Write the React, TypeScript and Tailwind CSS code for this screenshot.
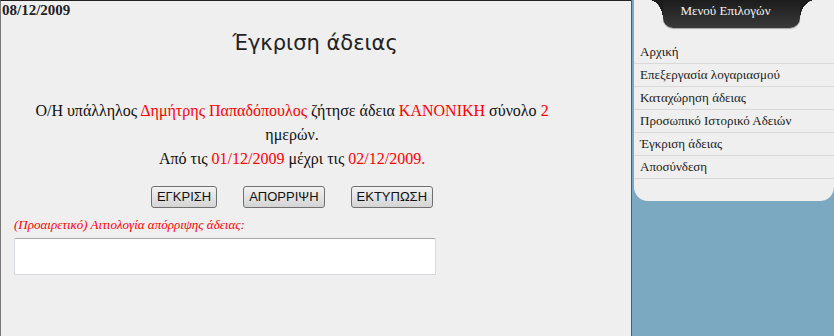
import React from "react";

export default function App() {
  const menu = [
    "Αρχική",
    "Επεξεργασία λογαριασμού",
    "Καταχώρηση άδειας",
    "Προσωπικό Ιστορικό Αδειών",
    "Έγκριση άδειας",
    "Αποσύνδεση",
  ];
  return (
    <div className="flex w-[834px] h-[336px] overflow-hidden bg-[#efefef] font-['Liberation_Serif','Times_New_Roman',serif]">
      {/* main */}
      <div className="w-[631px] h-full border-l border-l-[#7a7a7a] border-t border-t-[#222] flex flex-col">
        <div className="text-[15px] font-bold leading-[18px] text-[#222] pl-[1px]">08/12/2009</div>
        <h1 className="mt-[11px] text-center text-[21px] leading-[26px] text-[#222] pr-[2px] font-['DejaVu_Sans',Verdana,sans-serif]">
          Έγκριση άδειας
        </h1>
        <div className="ml-[21px] w-[540px] mt-[43px] text-center text-[16px] leading-[24px] text-[#111]">
          Ο/Η υπάλληλος <span className="text-[#ff0000]">Δημήτρης Παπαδόπουλος</span> ζήτησε άδεια{" "}
          <span className="text-[#ff0000]">ΚΑΝΟΝΙΚΗ</span> σύνολο <span className="text-[#ff0000]">2</span> ημερών.
          <br />
          Από τις <span className="text-[#ff0000]">01/12/2009</span> μέχρι τις{" "}
          <span className="text-[#ff0000]">02/12/2009</span>
          <span className="text-[#ff0000]">.</span>
        </div>
        <div className="ml-[21px] w-[540px] mt-[15px] flex justify-center gap-[26px]">
          {["ΕΓΚΡΙΣΗ", "ΑΠΟΡΡΙΨΗ", "ΕΚΤΥΠΩΣΗ"].map((b) => (
            <button
              key={b}
              className="h-[22px] px-[5px] border border-[#707070] rounded-[3px] bg-gradient-to-b from-[#f2f2f2] to-[#d4d4d4] text-[13px] leading-[18px] text-[#111] font-['Liberation_Sans',Arial,sans-serif]"
            >
              {b}
            </button>
          ))}
        </div>
        <div className="ml-[13px] mt-[8px] text-[13px] italic leading-[17px] text-[#ff0000]">
          (Προαιρετικό) Αιτιολογία απόρριψης άδειας:
        </div>
        <div className="ml-[13px] mt-[5px] w-[422px] h-[37px] bg-white border border-[#d6d9de] border-t-[#a9a9a9] rounded-[2px]" />
      </div>
      {/* divider */}
      <div className="w-[1px] h-full bg-[#5a5a5a]" />
      <div className="w-[2px] h-full bg-[#7ba9c2]" />
      {/* sidebar */}
      <div className="flex-1 h-full bg-[#7ba9c2] flex flex-col">
        <div className="bg-[#efefef] rounded-b-[14px] pb-[22px]">
          <div className="h-[28px] flex justify-start pl-[29px]">
            <div className="relative w-[137px] h-[28px] rounded-b-[10px] bg-gradient-to-b from-[#1c1c1c] to-[#3a3a3a] flex items-start justify-center pr-[12px] shadow-[0_1px_1px_rgba(0,0,0,0.3)]">
              <div className="absolute left-[-14px] top-0 w-[14px] h-[20px] bg-[radial-gradient(ellipse_14px_20px_at_0_100%,transparent_99%,#1c1c1c_100%)]" />
              <div className="absolute right-[-15px] top-0 w-[15px] h-[20px] bg-[radial-gradient(ellipse_15px_20px_at_100%_100%,transparent_99%,#1c1c1c_100%)]" />
              <span className="relative mt-[3px] text-[13px] leading-[16px] text-[#f4f4f4]">Μενού Επιλογών</span>
            </div>
          </div>
          <div className="mt-[13px]">
            {menu.map((m) => (
              <div
                key={m}
                className="h-[23px] border-b border-b-[#d9d9d9] pl-[6px] text-[13px] leading-[22px] text-[#1a1a1a]"
              >
                {m}
              </div>
            ))}
          </div>
        </div>
      </div>
    </div>
  );
}
